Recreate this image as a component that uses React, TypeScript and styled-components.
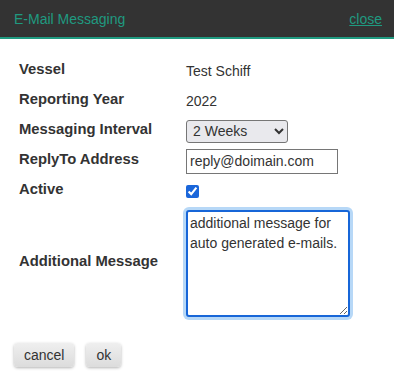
import React from "react";
import styled, { createGlobalStyle } from "styled-components";

const GlobalStyle = createGlobalStyle`
  html, body { margin: 0; padding: 0; background: #ffffff; }
  body { font-family: Arial, "Liberation Sans", sans-serif; font-size: 14px; color: #333333; }
`;

const Dialog = styled.div`
  width: 394px;
  height: 390px;
  background: #ffffff;
  display: flex;
  flex-direction: column;
  overflow: hidden;
`;

const Header = styled.div`
  box-sizing: border-box;
  background: #333333;
  border-bottom: 2px solid #1f9a80;
  display: flex;
  align-items: center;
  justify-content: space-between;
  padding: 0 12px 0 14px;
  flex: none;
  height: 39px;
`;

const Title = styled.span`
  color: #1f9a80;
  font-size: 14px;
`;

const CloseLink = styled.a`
  color: #1f9a80;
  font-size: 14px;
  text-decoration: underline;
  cursor: pointer;
`;

const Form = styled.div`
  display: grid;
  grid-template-columns: 167px 1fr;
  grid-template-rows: repeat(5, 30px) 114px;
  align-items: center;
  padding: 17px 0 0 19px;
`;

const Label = styled.div`
  font-weight: bold;
  font-size: 14.8px;
  color: #333333;
  padding-bottom: 5px;
`;

const Value = styled.div`
  font-size: 14px;
  color: #333333;
  display: flex;
  align-items: center;
`;

const Select = styled.select`
  width: 102px;
  height: 23px;
  font-family: Arial, "Liberation Sans", sans-serif;
  font-size: 14px;
  color: #333333;
  background: #e9e9ed;
  border: 1px solid #767676;
  border-radius: 3px;
  padding: 0 2px;
  margin: 0;
`;

const TextInput = styled.input`
  width: 152px;
  height: 25px;
  box-sizing: border-box;
  font-family: Arial, "Liberation Sans", sans-serif;
  font-size: 14px;
  color: #333333;
  border: 1px solid #767676;
  border-radius: 0;
  padding: 1px 3px;
  margin: 0;
`;

const Check = styled.input`
  width: 13px;
  height: 13px;
  margin: 0;
  accent-color: #1a66da;
`;

const TextArea = styled.textarea`
  width: 164px;
  height: 107px;
  box-sizing: border-box;
  font-family: Arial, "Liberation Sans", sans-serif;
  font-size: 14px;
  line-height: 20px;
  color: #333333;
  border: 2px solid #1766d8;
  border-radius: 3px;
  box-shadow: 0 0 0 3px #b7d8f7;
  outline: none;
  padding: 1px 2px;
  margin: 0;
  resize: both;
`;

const Footer = styled.div`
  display: flex;
  gap: 12px;
  padding: 23px 0 0 14px;
`;

const Button = styled.button`
  height: 24px;
  font-family: Arial, "Liberation Sans", sans-serif;
  font-size: 14px;
  color: #333333;
  padding: 0 10px;
  border: none;
  border-radius: 4px;
  background: linear-gradient(#efefef, #dcdcdc);
  box-shadow: 0 1px 3px rgba(0, 0, 0, 0.3);
  cursor: pointer;
`;

export default function App() {
  return (
    <>
      <GlobalStyle />
      <Dialog>
        <Header>
          <Title>E-Mail Messaging</Title>
          <CloseLink>close</CloseLink>
        </Header>
        <Form>
          <Label>Vessel</Label>
          <Value>Test Schiff</Value>
          <Label>Reporting Year</Label>
          <Value>2022</Value>
          <Label>Messaging Interval</Label>
          <Value>
            <Select defaultValue="2w">
              <option value="1w">1 Week</option>
              <option value="2w">2 Weeks</option>
              <option value="4w">4 Weeks</option>
            </Select>
          </Value>
          <Label>ReplyTo Address</Label>
          <Value>
            <TextInput defaultValue="reply@doimain.com" />
          </Value>
          <Label>Active</Label>
          <Value>
            <Check type="checkbox" defaultChecked />
          </Value>
          <Label>Additional Message</Label>
          <Value>
            <TextArea defaultValue={"additional message for auto generated e-mails."} />
          </Value>
        </Form>
        <Footer>
          <Button>cancel</Button>
          <Button>ok</Button>
        </Footer>
      </Dialog>
    </>
  );
}
